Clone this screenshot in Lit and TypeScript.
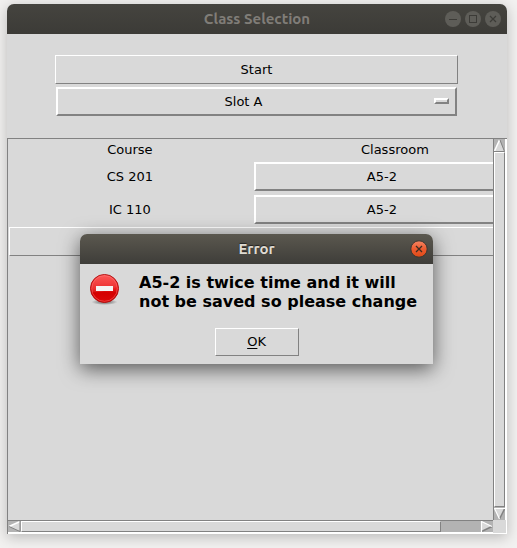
import { LitElement, html, css, svg } from "lit";
import { customElement, property, state } from "lit/decorators.js";

type Direction = "up" | "down" | "left" | "right";

@customElement("option-menu")
class OptionMenu extends LitElement {
  @property() label = "";
  @property({ type: Array }) options: string[] = [];

  static styles = css`
    :host {
      display: block;
      position: relative;
    }
    .field {
      appearance: none;
      display: block;
      box-sizing: border-box;
      width: 100%;
      height: 29px;
      margin: 0;
      padding: 0 26px 0 0;
      border: 2px solid;
      border-color: #fff #828282 #828282 #fff;
      border-radius: 0;
      background: #d9d9d9;
      color: #000;
      font: 13px "DejaVu Sans", sans-serif;
      text-align: center;
      text-align-last: center;
    }
    .mark {
      position: absolute;
      right: 8px;
      top: 11px;
      box-sizing: border-box;
      width: 15px;
      height: 6px;
      border: 2px solid;
      border-color: #fff #828282 #828282 #fff;
      pointer-events: none;
    }
  `;

  render() {
    return html`
      <select class="field" aria-label=${this.label}>
        ${this.options.map((o) => html`<option>${o}</option>`)}
      </select>
      <span class="mark"></span>
    `;
  }
}

@customElement("scroll-arrow")
class ScrollArrow extends LitElement {
  @property() direction: Direction = "up";

  static styles = css`
    :host {
      display: block;
      flex: none;
    }
    .arrow {
      display: block;
      width: 11px;
      height: 13px;
      padding: 0;
      border: 0;
      background: none;
    }
    .across {
      width: 13px;
      height: 11px;
    }
    .glyph {
      display: block;
      width: 100%;
      height: 100%;
    }
  `;

  private shape() {
    switch (this.direction) {
      case "up":
        return svg`<path d="M5.5 1L0.5 12.5H10.5Z" fill="#d9d9d9"/>
          <path d="M0.5 12L5.5 1" stroke="#fff" stroke-width="1.5" fill="none"/>
          <path d="M6 1L10.5 12.5H0" stroke="#828282" fill="none"/>`;
      case "down":
        return svg`<path d="M0.5 1.5H10.5L5.5 12Z" fill="#d9d9d9"/>
          <path d="M10.5 2L5.5 12" stroke="#828282" stroke-width="1.5" fill="none"/>
          <path d="M11 1.5H0.5L5.5 12" stroke="#fff" stroke-width="1.2" fill="none"/>`;
      case "left":
        return svg`<path d="M1 5.5L12 0.5V10.5Z" fill="#d9d9d9"/>
          <path d="M1 5.5L12 0.5" stroke="#fff" stroke-width="1.5" fill="none"/>
          <path d="M1 5.5L12 10.5V0" stroke="#828282" fill="none"/>`;
      default:
        return svg`<path d="M1.5 0.5L12 5.5L1.5 10.5Z" fill="#d9d9d9"/>
          <path d="M1.5 10.5L12 5.5" stroke="#828282" stroke-width="1.5" fill="none"/>
          <path d="M1.5 11V0.5L12 5.5" stroke="#fff" stroke-width="1.2" fill="none"/>`;
    }
  }

  render() {
    const across = this.direction === "left" || this.direction === "right";
    return html`
      <button class="arrow ${across ? "across" : ""}" aria-label="Scroll ${this.direction}">
        <svg class="glyph" viewBox=${across ? "0 0 13 11" : "0 0 11 13"}>${this.shape()}</svg>
      </button>
    `;
  }
}

@customElement("app-root")
class AppRoot extends LitElement {
  @state() private dialogOpen = true;

  private rows = [
    { course: "CS 201", room: "A5-2" },
    { course: "IC 110", room: "A5-2" },
  ];

  static styles = css`
    :host {
      display: flex;
      box-sizing: border-box;
      min-height: 100vh;
      padding: 4px 10px 14px 7px;
      position: relative;
      overflow: hidden;
      background: #f2f1f0;
      color: #000;
      font: 13px/16px "DejaVu Sans", sans-serif;
    }
    .window {
      flex: 1;
      min-width: 0;
      display: flex;
      flex-direction: column;
      border-radius: 7px 7px 0 0;
      background: #d9d9d9;
      box-shadow: 0 3px 14px rgba(0, 0, 0, 0.24);
    }
    .titlebar {
      flex: none;
      display: grid;
      grid-template-columns: 1fr auto 1fr;
      align-items: center;
      box-sizing: border-box;
      height: 30px;
      padding: 0 5px;
      border-radius: 7px 7px 0 0;
      background: linear-gradient(#45443f, #3c3b37);
      color: #807d78;
      font: bold 15px/20px Ubuntu, "Noto Sans", sans-serif;
    }
    .titlebar.active {
      background: linear-gradient(#5b584f, #3e3d39);
      color: #dfdbd2;
      text-shadow: 0 -1px 1px #222;
    }
    .title {
      grid-column: 2;
      margin: 0;
      font: inherit;
    }
    .controls {
      display: flex;
      justify-content: flex-end;
      gap: 2px;
    }
    .control {
      width: 18px;
      height: 18px;
      padding: 0;
      border: 0;
      background: none;
    }
    .icon {
      display: block;
      width: 18px;
      height: 18px;
    }
    .form {
      display: flex;
      flex-direction: column;
      gap: 3px;
      padding: 21px 49px 22px 48px;
    }
    .form option-menu {
      margin: 0 1px;
    }
    .button {
      display: block;
      box-sizing: border-box;
      width: 100%;
      height: 29px;
      margin: 0;
      padding: 0;
      border: 1px solid;
      border-color: #fff #828282 #828282 #fff;
      background: #d9d9d9;
      color: #000;
      font: 13px/16px "DejaVu Sans", sans-serif;
    }
    .frame {
      flex: 1;
      display: grid;
      grid-template: minmax(0, 1fr) 14px / minmax(0, 1fr) 14px;
      border-left: 1px solid #828282;
      border-top: 1px solid #828282;
    }
    .view {
      overflow: hidden;
    }
    .courses {
      width: calc(100% + 45px);
      table-layout: fixed;
      border-collapse: collapse;
    }
    .courses th,
    .courses td {
      height: 33px;
      padding: 0;
      font-weight: normal;
      text-align: center;
    }
    .courses th {
      height: 21px;
    }
    .courses .name {
      width: 46%;
    }
    .courses .wide {
      height: 31px;
    }
    .courses option-menu {
      margin: 0 2px;
    }
    .courses .button {
      width: calc(100% - 2px);
      margin: 0 1px;
    }
    .bar {
      display: flex;
      box-sizing: border-box;
      background: #b3b3b3;
      border: 0 solid;
    }
    .vertical {
      flex-direction: column;
      border-left: 1px solid #828282;
      border-right: 2px solid #fff;
    }
    .horizontal {
      border-top: 1px solid #828282;
      border-bottom: 2px solid #fff;
    }
    .track {
      flex: 1;
      display: flex;
    }
    .thumb {
      box-sizing: border-box;
      width: 100%;
      border: 1px solid;
      border-color: #fff #828282 #828282 #fff;
      background: #d9d9d9;
    }
    .thumb.partial {
      width: 91.5%;
    }
    .corner {
      border-right: 1px solid #fff;
      border-bottom: 1px solid #fff;
    }
    .dialog {
      position: absolute;
      left: 80px;
      top: 234px;
      border-radius: 7px 7px 0 0;
      background: #d9d9d9;
      box-shadow: 0 5px 20px rgba(0, 0, 0, 0.6);
    }
    .content {
      display: flex;
      gap: 20px;
      padding: 9px 16px 0 10px;
    }
    .stop {
      flex: none;
      display: block;
      width: 29px;
      height: 33px;
      margin-top: 1px;
    }
    .message {
      margin: 0;
      font: bold 16px/19px "DejaVu Sans", sans-serif;
      white-space: pre-line;
    }
    .actions {
      display: flex;
      justify-content: center;
      padding: 17px 0 8px;
    }
    .actions .button {
      width: 84px;
      height: 28px;
    }
    .key {
      text-decoration: underline;
      text-underline-offset: 2px;
    }
  `;

  private windowIcon(kind: "minimize" | "maximize" | "close") {
    const marks = {
      minimize: svg`<path d="M5 9.5H13" stroke="#3c3b37" fill="none"/>`,
      maximize: svg`<rect x="5.5" y="5.5" width="7" height="7" stroke="#3c3b37" fill="none"/>`,
      close: svg`<path d="M6 6L12 12M12 6L6 12" stroke="#3c3b37" stroke-width="1.2" fill="none"/>`,
    };
    return html`<svg class="icon" viewBox="0 0 18 18">
      <circle cx="9" cy="9" r="8" fill="#5e5d58" />
      ${marks[kind]}
    </svg>`;
  }

  private dialog() {
    return html`
      <section class="dialog" role="alertdialog" aria-labelledby="dialog-title" aria-describedby="dialog-text">
        <header class="titlebar active">
          <h2 class="title" id="dialog-title">Error</h2>
          <div class="controls">
            <button class="control" aria-label="Close" @click=${() => (this.dialogOpen = false)}>
              <svg class="icon" viewBox="0 0 18 18">
                <defs>
                  <linearGradient id="orange" x1="0" y1="0" x2="0" y2="1">
                    <stop offset="0" stop-color="#f58462" />
                    <stop offset="0.5" stop-color="#ec5b30" />
                    <stop offset="1" stop-color="#df4a16" />
                  </linearGradient>
                </defs>
                <circle cx="9" cy="9" r="8.2" fill="url(#orange)" stroke="#3a3631" />
                <path d="M6 6L12 12M12 6L6 12" stroke="#3c2c22" stroke-width="1.3" fill="none" />
              </svg>
            </button>
          </div>
        </header>
        <div class="content">
          <svg class="stop" viewBox="0 0 29 33" aria-hidden="true">
            <defs>
              <linearGradient id="red" x1="0" y1="0" x2="0" y2="1">
                <stop offset="0" stop-color="#ff4b4b" />
                <stop offset="0.5" stop-color="#ea2020" />
                <stop offset="0.65" stop-color="#d40000" />
                <stop offset="1" stop-color="#dc0808" />
              </linearGradient>
              <radialGradient id="shade">
                <stop offset="0.5" stop-color="#000" stop-opacity="0.3" />
                <stop offset="1" stop-color="#000" stop-opacity="0" />
              </radialGradient>
            </defs>
            <ellipse cx="14.5" cy="28" rx="13" ry="3" fill="url(#shade)" />
            <circle cx="14.5" cy="14.5" r="14" fill="url(#red)" stroke="#b00c0c" />
            <circle cx="14.5" cy="14.5" r="12.8" fill="none" stroke="#ff7070" stroke-opacity="0.5" />
            <path d="M2 18Q9 19 14.5 17T27 13A12.5 12.5 0 0 0 2 13Z" fill="#fff" fill-opacity="0.08" />
            <rect x="6" y="12" width="17" height="5" fill="#f4f4f4" />
          </svg>
          <p class="message" id="dialog-text">${"A5-2 is twice time and it will\nnot be saved so please change"}</p>
        </div>
        <div class="actions">
          <button class="button" @click=${() => (this.dialogOpen = false)}><span class="key">O</span>K</button>
        </div>
      </section>
    `;
  }

  render() {
    return html`
      <main class="window">
        <header class="titlebar">
          <h1 class="title">Class Selection</h1>
          <div class="controls">
            <button class="control" aria-label="Minimize">${this.windowIcon("minimize")}</button>
            <button class="control" aria-label="Maximize">${this.windowIcon("maximize")}</button>
            <button class="control" aria-label="Close">${this.windowIcon("close")}</button>
          </div>
        </header>
        <div class="form">
          <button class="button" @click=${() => (this.dialogOpen = true)}>Start</button>
          <option-menu label="Slot" .options=${["Slot A"]}></option-menu>
        </div>
        <div class="frame">
          <div class="view">
            <table class="courses">
              <thead>
                <tr>
                  <th class="name" scope="col">Course</th>
                  <th scope="col">Classroom</th>
                </tr>
              </thead>
              <tbody>
                ${this.rows.map(
                  (r) => html`<tr>
                    <td>${r.course}</td>
                    <td><option-menu label="Classroom for ${r.course}" .options=${[r.room]}></option-menu></td>
                  </tr>`
                )}
              </tbody>
              <tfoot>
                <tr>
                  <td class="wide" colspan="2"><button class="button" aria-label="Save"></button></td>
                </tr>
              </tfoot>
            </table>
          </div>
          <div class="bar vertical">
            <scroll-arrow direction="up"></scroll-arrow>
            <div class="track"><div class="thumb"></div></div>
            <scroll-arrow direction="down"></scroll-arrow>
          </div>
          <div class="bar horizontal">
            <scroll-arrow direction="left"></scroll-arrow>
            <div class="track"><div class="thumb partial"></div></div>
            <scroll-arrow direction="right"></scroll-arrow>
          </div>
          <div class="corner"></div>
        </div>
      </main>
      ${this.dialogOpen ? this.dialog() : ""}
    `;
  }
}
